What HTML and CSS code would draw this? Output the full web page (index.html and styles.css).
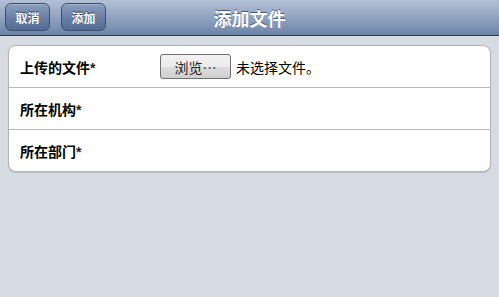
FILE: index.html
```html
<!DOCTYPE html>
<html>
<head>
<meta charset="utf-8">
<link rel="stylesheet" href="styles.css">
</head>
<body>
<div class="toolbar">
  <div class="btns">
    <span class="tbtn">取消</span>
    <span class="tbtn">添加</span>
  </div>
  <div class="title">添加文件</div>
</div>
<div class="content">
  <div class="card">
    <div class="row">
      <span class="label">上传的文件<span class="star">*</span></span>
      <span class="file"><span class="browse">浏览⋯</span><span class="none">未选择文件。</span></span>
    </div>
    <div class="row">
      <span class="label">所在机构<span class="star">*</span></span>
    </div>
    <div class="row">
      <span class="label">所在部门<span class="star">*</span></span>
    </div>
  </div>
</div>
</body>
</html>
```
FILE: styles.css
```css
html, body { margin: 0; padding: 0; }
body {
  width: 499px;
  height: 297px;
  background: #d7dbe3;
  font-family: "Liberation Sans", "Noto Sans CJK SC", sans-serif;
  overflow: hidden;
}
.toolbar {
  position: relative;
  height: 36px;
  background: linear-gradient(#b2c0d6, #8a9dbb 60%, #6d83a7);
  border-bottom: 1px solid #2d3642;
  box-sizing: border-box;
  display: flex;
  align-items: center;
  justify-content: center;
}
.btns {
  position: absolute;
  left: 5px;
  top: 3px;
  display: flex;
  gap: 11px;
}
.tbtn {
  width: 45px;
  height: 28px;
  box-sizing: border-box;
  border: 1px solid #3c4f6e;
  border-radius: 6px;
  background: linear-gradient(#8da0be, #6a80a6 50%, #546c94);
  color: #fff;
  font-size: 12px;
  font-weight: bold;
  display: flex;
  align-items: center;
  justify-content: center;
  text-shadow: 0 -1px 0 #2d3b55;
  box-shadow: inset 0 1px 0 rgba(255,255,255,0.2);
}
.title {
  color: #fff;
  font-size: 18px;
  font-weight: bold;
  text-shadow: 0 -1px 0 #4a5a75;
}
.content {
  padding: 9px 8px;
}
.card {
  background: #fff;
  border: 1px solid #b4b4b4;
  border-radius: 8px;
  box-shadow: 0 1px 1px rgba(0,0,0,0.15);
}
.row {
  height: 41px;
  display: flex;
  align-items: center;
  padding-left: 11px;
  border-top: 1px solid #b9b9b9;
}
.row:first-child { border-top: none; }
.label {
  width: 140px;
  font-size: 14px;
  font-weight: bold;
  color: #000;
}
.star { color: #1f1f1f; }
.file {
  display: flex;
  align-items: center;
  gap: 5px;
  font-size: 14px;
}
.browse {
  width: 71px;
  height: 25px;
  box-sizing: border-box;
  border: 1px solid #707070;
  border-radius: 3px;
  background: linear-gradient(#f2f2f2, #ebebeb 50%, #dddddd 51%, #cfcfcf);
  display: flex;
  align-items: center;
  justify-content: center;
  font-size: 14px;
  color: #222;
}
.none { color: #000; }
```
